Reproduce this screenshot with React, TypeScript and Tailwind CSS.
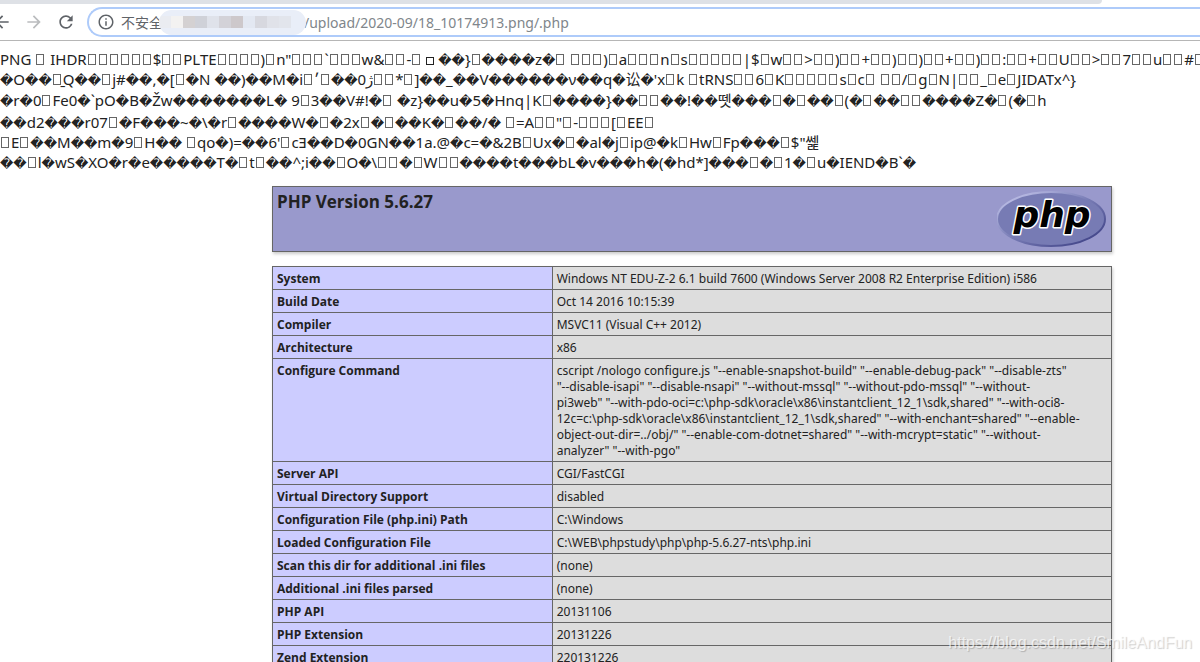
import React from "react";
import { MdArrowBack, MdArrowForward, MdInfoOutline, MdRefresh } from "react-icons/md";

interface InfoRow {
  name: string;
  value: string;
}

interface RawLineProps {
  text: string;
  className?: string;
}

const infoRows: InfoRow[] = [
  {
    name: "System",
    value:
      "Windows NT EDU-Z-2 6.1 build 7600 (Windows Server 2008 R2 Enterprise Edition) i586",
  },
  { name: "Build Date", value: "Oct 14 2016 10:15:39" },
  { name: "Compiler", value: "MSVC11 (Visual C++ 2012)" },
  { name: "Architecture", value: "x86" },
  {
    name: "Configure Command",
    value: `cscript /nologo configure.js "--enable-snapshot-build" "--enable-debug-pack" "--disable-zts"
"--disable-isapi" "--disable-nsapi" "--without-mssql" "--without-pdo-mssql" "--without-
pi3web" "--with-pdo-oci=c:\\php-sdk\\oracle\\x86\\instantclient_12_1\\sdk,shared" "--with-oci8-
12c=c:\\php-sdk\\oracle\\x86\\instantclient_12_1\\sdk,shared" "--with-enchant=shared" "--enable-
object-out-dir=../obj/" "--enable-com-dotnet=shared" "--with-mcrypt=static" "--without-
analyzer" "--with-pgo"`,
  },
  { name: "Server API", value: "CGI/FastCGI" },
  { name: "Virtual Directory Support", value: "disabled" },
  { name: "Configuration File (php.ini) Path", value: "C:\\Windows" },
  {
    name: "Loaded Configuration File",
    value: "C:\\WEB\\phpstudy\\php\\php-5.6.27-nts\\php.ini",
  },
  { name: "Scan this dir for additional .ini files", value: "(none)" },
  { name: "Additional .ini files parsed", value: "(none)" },
  { name: "PHP API", value: "20131106" },
  { name: "PHP Extension", value: "20131226" },
  { name: "Zend Extension", value: "220131226" },
];

// PNG bytes printed as text, ▯ stands for an unprintable control character
const rawLines: RawLineProps[] = [
  {
    text: "PNG ▯ IHDR▯▯▯▯▯▯$▯▯PLTE▯▯▯▯)▯n\"▯▯▯`▯▯▯w&▯▯-▯▫��}▯����z�▯ ▯▯▯)▯a▯▯▯n▯s▯▯▯▯▯|$▯w▯▯>▯▯)▯▯+▯▯)▯▯)▯▯+▯▯)▯▯:▯▯+▯▯U▯▯>▯▯7▯▯u▯▯#▯▯",
  },
  {
    text: "�O��▯̱Q��▯j#��,�[▯�N ��)��M�i▯׳▯��0ژ▯▯*▯]��_��V������ν��q�讼�'x▯k ▯tRNS▯▯6▯K▯▯▯▯▯s▯c▯ ▯▯/▯g▯N|▯▯_▯e▯JIDATx^}",
  },
  {
    text: "�r�0▯Fe0�`pO�B�Žw�������L� 9▯3��V#!�▯ �z}��u�5�Hnq|K▯����}��▯▯��!��뗏���▯�▯��▯(�▯��▯▯����Z�▯(�▯h",
    className: "h-[23px] leading-[23px]",
  },
  {
    text: "��d2���r07▯�F���~�\\�r▯����W�▯�2x▯�▯��K�▯��/� ▯=A▯▯\"▯-▯▯▯[▯EE▯",
  },
  {
    text: "▯E▯��M��m�9▯H�� ▯qo�)=��6'▯cƎ��D�0GN��1a.@�c=�&2B▯Ux�▯�al�j▯ip@�k▯Hw▯Fp���▯$\"쎑",
  },
  {
    text: "��▯l�wS�XO�r�e�����T�▯t▯��^;i��▯O�\\▯▯�▯W▯▯����t���bL�v���h�(�hd*]���▯�▯1�▯u�IEND�B`�",
  },
];

const RawLine: React.FC<RawLineProps> = ({ text, className = "h-5 leading-5" }) => (
  <div
    className={`overflow-hidden whitespace-pre [unicode-bidi:bidi-override] ${className}`}
  >
    {text.split(/([▯▫�])/).map((part, i) => {
      if (part === "▯") {
        return (
          <span
            key={i}
            className="mr-0.5 ml-px inline-block h-[11px] w-2 border border-[#666]"
          />
        );
      }
      if (part === "▫") {
        return (
          <span key={i} className="mx-1 inline-block h-2 w-2 border border-[#222]" />
        );
      }
      if (part === "�") {
        return (
          <span key={i} className="font-['DejaVu_Sans'] text-[13px] leading-none">
            �
          </span>
        );
      }
      return part;
    })}
  </div>
);

const BrowserBar: React.FC = () => (
  <header className="bg-white">
    <div className="h-1 bg-white pr-[98px]">
      <div className="h-full rounded-br bg-[#dee1e6]"></div>
    </div>
    <div className="flex h-[37px] items-center overflow-hidden border-b border-[#b6b6b6]">
      <nav className="-ml-2 flex w-[95px] shrink-0 items-center gap-3">
        <button aria-label="Back">
          <MdArrowBack className="h-5 w-5 text-[#5f6368]" />
        </button>
        <button aria-label="Forward">
          <MdArrowForward className="h-5 w-5 text-[#babcbe]" />
        </button>
        <button aria-label="Reload">
          <MdRefresh className="h-5 w-5 text-[#5f6368]" />
        </button>
      </nav>
      <div className="flex h-[30px] min-w-0 flex-1 items-center rounded-l-full border-2 border-r-0 border-[#aecbfa] pl-2">
        <MdInfoOutline className="h-[18px] w-[18px] shrink-0 text-[#5f6368]" />
        <span className="ml-1.5 shrink-0 text-[14px] whitespace-nowrap text-[#5f6368]">
          不安全
        </span>
        <div className="z-10 -ml-1 flex h-[25px] w-[147px] shrink-0 items-center overflow-hidden rounded-full bg-[#e9eef8]">
          <div className="h-3 w-3 bg-[#eaecf1]"></div>
          <div className="h-3 w-3 bg-[#f3f2f1]"></div>
          <div className="h-3 w-3 bg-[#d4d1d2]"></div>
          <div className="h-3 w-3 bg-[#cfd1d8]"></div>
          <div className="h-3 w-3 bg-[#dfe2ea]"></div>
          <div className="h-3 w-3 bg-[#d3d2d8]"></div>
          <div className="h-3 w-3 bg-[#cdc8cb]"></div>
          <div className="h-3 w-3 bg-[#e3e8f2]"></div>
          <div className="h-3 w-3 bg-[#d7d8df]"></div>
          <div className="h-3 w-3 bg-[#e0e2e9]"></div>
          <div className="h-3 w-3 bg-[#e2e5ec]"></div>
        </div>
        <input
          aria-label="Address"
          className="-ml-0.5 min-w-0 flex-1 text-[14px] text-[#80868b] outline-none"
          defaultValue="/upload/2020-09/18_10174913.png/.php"
        />
      </div>
    </div>
  </header>
);

const PhpLogo: React.FC = () => (
  <svg viewBox="0 0 110 62" className="h-[62px] w-[110px]" role="img" aria-label="PHP logo">
    <defs>
      <linearGradient id="rim" x1="0" y1="0" x2="1" y2="1">
        <stop offset="0.15" stopColor="#b4b6e0" />
        <stop offset="0.5" stopColor="#777bb4" />
        <stop offset="0.85" stopColor="#484b8e" />
      </linearGradient>
    </defs>
    <ellipse cx="54" cy="32" rx="54" ry="27" fill="#777bb4" stroke="url(#rim)" strokeWidth="2" />
    <text
      x="55"
      y="40"
      textAnchor="middle"
      fontFamily="DejaVu Sans, sans-serif"
      fontSize="36"
      fontWeight="700"
      fontStyle="italic"
      fill="#000"
      stroke="#fff"
      strokeWidth="3"
      strokeLinejoin="round"
      paintOrder="stroke"
    >
      php
    </text>
  </svg>
);

const PhpInfo: React.FC = () => (
  <main className="pt-3.5 pr-[88px] pl-[272px]">
    <div className="flex h-[66px] items-start justify-between border border-[#666] bg-[#9999cc] px-1 shadow-[1px_2px_3px_#ccc]">
      <h1 className="pt-[3px] font-['Open_Sans'] text-[17px] leading-6 font-bold">
        PHP Version 5.6.27
      </h1>
      <PhpLogo />
    </div>
    <table className="mt-3.5 w-full table-fixed border-collapse text-[12px] leading-4 shadow-[1px_2px_3px_#ccc]">
      <tbody>
        {infoRows.map((row) => (
          <tr key={row.name}>
            <th
              scope="row"
              className="w-1/3 border border-[#666] bg-[#ccccff] px-1 pt-1 pb-0.5 text-left align-top font-['Open_Sans'] font-bold"
            >
              {row.name}
            </th>
            <td className="border border-[#666] bg-[#dddddd] px-1 pt-1 pb-0.5 align-top whitespace-pre">
              {row.value}
            </td>
          </tr>
        ))}
      </tbody>
    </table>
  </main>
);

const App: React.FC = () => {
  return (
    <div className="relative h-screen overflow-hidden bg-white font-['Noto_Sans','Noto_Sans_CJK_SC','Noto_Sans_CJK_KR',sans-serif] text-[#222]">
      <BrowserBar />
      <div className="pt-2 text-[15px]">
        {rawLines.map((line, i) => (
          <RawLine key={i} {...line} />
        ))}
      </div>
      <PhpInfo />
      <div className="absolute right-2 bottom-[7px] font-['Liberation_Sans',sans-serif] text-[16px] text-white/70 [text-shadow:1px_1px_1px_#0003]">
        https://blog.csdn.net/SmileAndFun
      </div>
    </div>
  );
};

export default App;
